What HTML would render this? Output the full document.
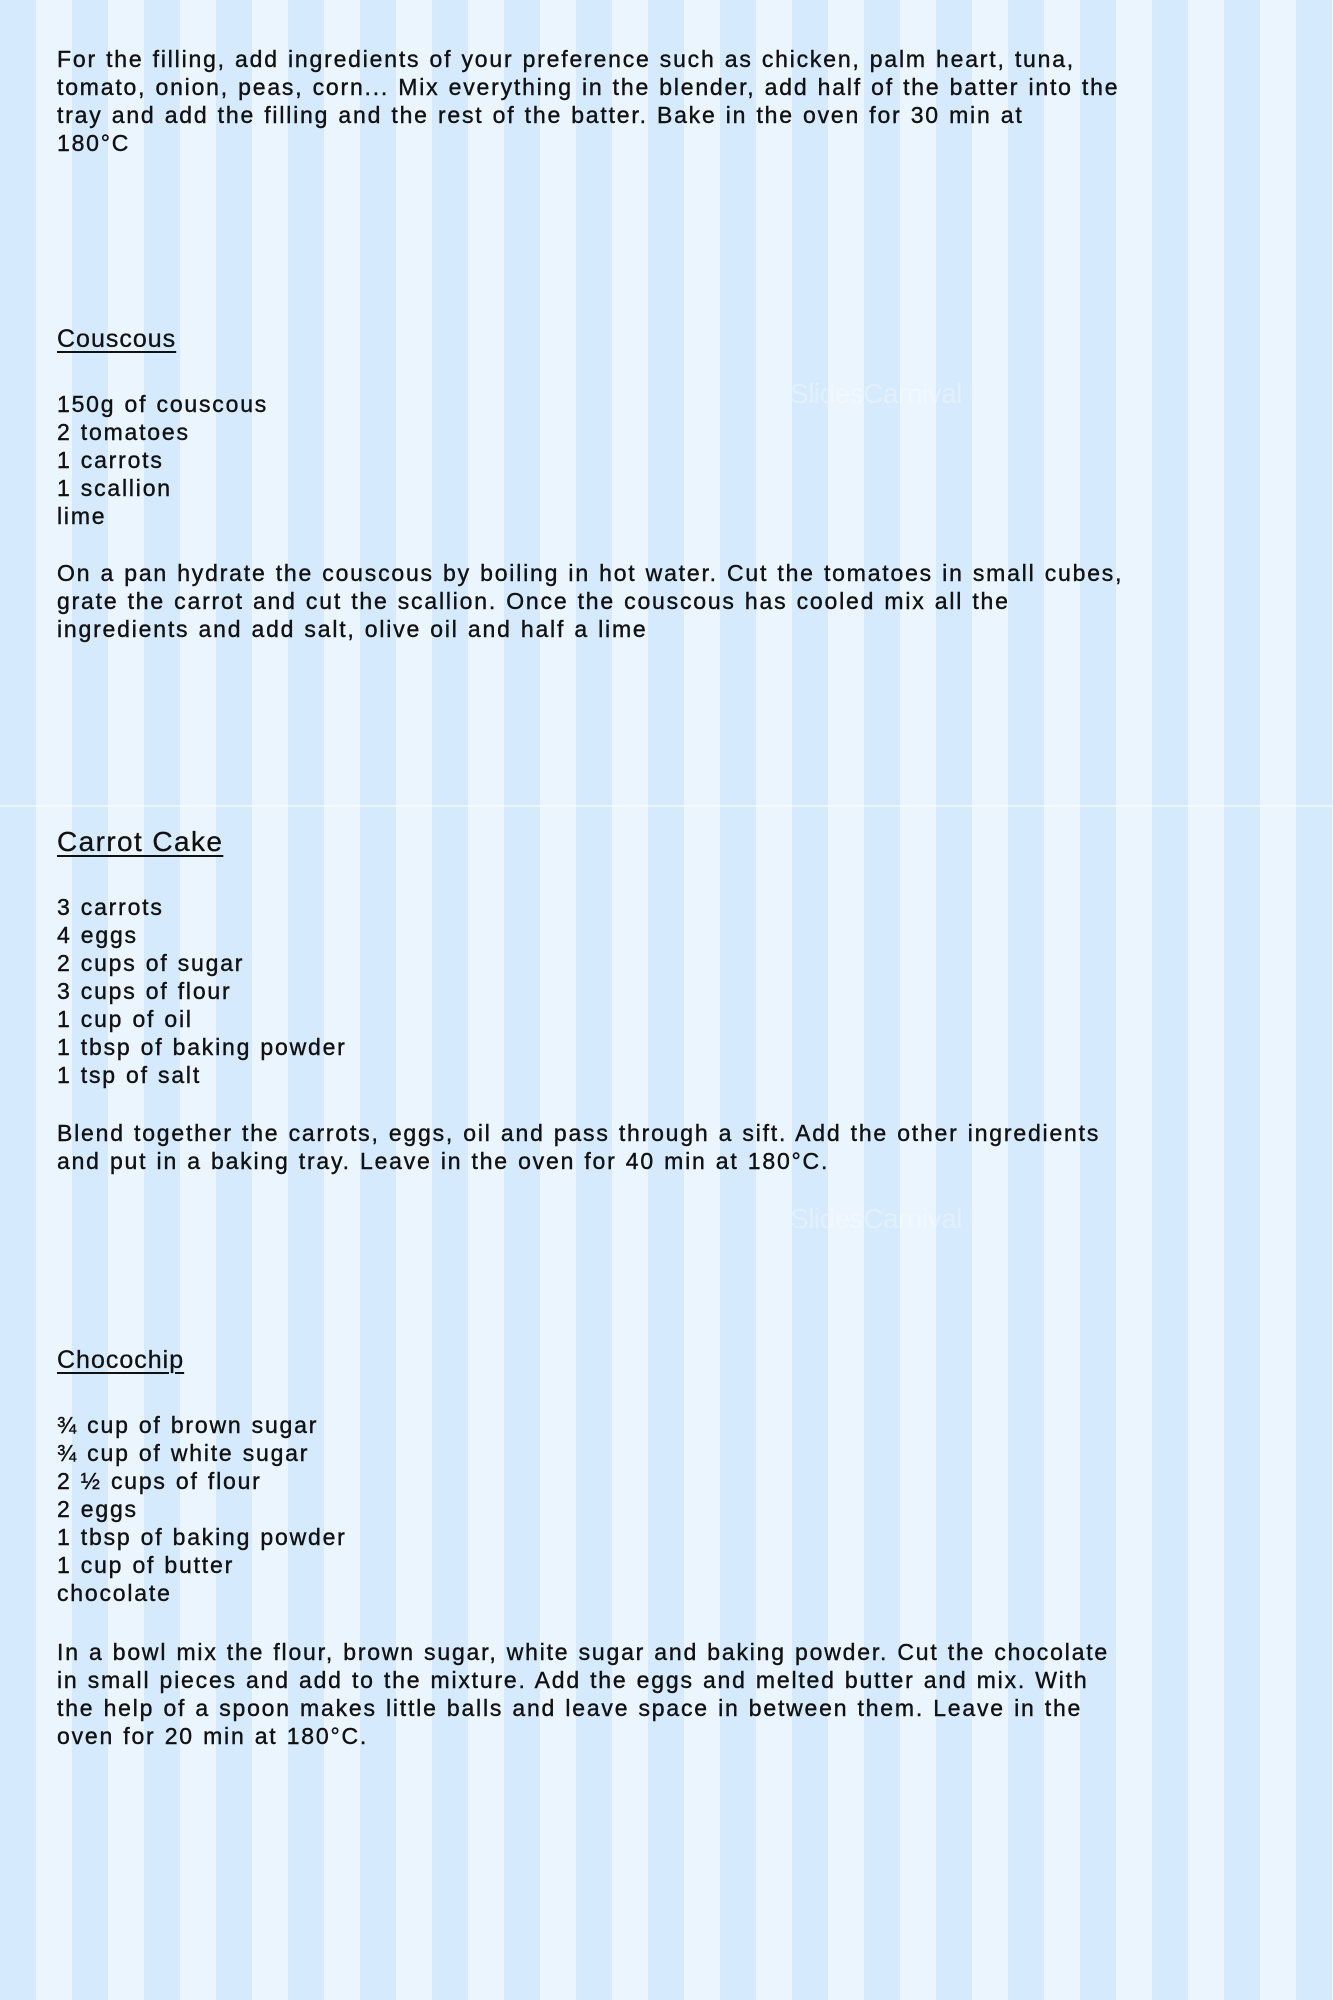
<!DOCTYPE html>
<html><head><meta charset="utf-8"><style>
html,body{margin:0;padding:0}
body{width:1333px;height:2000px;position:relative;overflow:hidden;
background:repeating-linear-gradient(90deg,#d5eafc 0,#d5eafc 36px,#eaf5fe 36px,#eaf5fe 72px);
font-family:"Liberation Sans",sans-serif;color:#111;}
.seam{position:absolute;left:0;width:1333px;height:2px;top:805px;background:rgba(255,255,255,.5)}
.b{position:absolute;left:57px;font-size:23px;line-height:28px;letter-spacing:1.8px;word-spacing:1px;white-space:pre;margin:0;-webkit-text-stroke:0.4px #111}
.h{position:absolute;left:57px;font-size:25px;line-height:30px;text-decoration:underline;text-decoration-thickness:2px;text-underline-offset:4px;letter-spacing:1px;margin:0;-webkit-text-stroke:0.3px #111}
.wm{position:absolute;font-size:28px;color:#fff;opacity:.3;letter-spacing:-0.5px}
</style></head><body>
<div class="seam"></div>
<div class="wm" style="left:790px;top:378px">SlidesCarnival</div>
<div class="wm" style="left:790px;top:1203px">SlidesCarnival</div>

<p class="b" style="top:45px">For the filling, add ingredients of your preference such as chicken, palm heart, tuna,
tomato, onion, peas, corn... Mix everything in the blender, add half of the batter into the
tray and add the filling and the rest of the batter. Bake in the oven for 30 min at
180°C</p>

<p class="h" style="top:324px">Couscous</p>
<p class="b" style="top:390px">150g of couscous
2 tomatoes
1 carrots
1 scallion
lime</p>
<p class="b" style="top:559px">On a pan hydrate the couscous by boiling in hot water. Cut the tomatoes in small cubes,
grate the carrot and cut the scallion. Once the couscous has cooled mix all the
ingredients and add salt, olive oil and half a lime</p>

<p class="h" style="top:826px;font-size:28px;line-height:32px;letter-spacing:1.4px">Carrot Cake</p>
<p class="b" style="top:893px">3 carrots
4 eggs
2 cups of sugar
3 cups of flour
1 cup of oil
1 tbsp of baking powder
1 tsp of salt</p>
<p class="b" style="top:1119px">Blend together the carrots, eggs, oil and pass through a sift. Add the other ingredients
and put in a baking tray. Leave in the oven for 40 min at 180°C.</p>

<p class="h" style="top:1345px">Chocochip</p>
<p class="b" style="top:1411px">¾ cup of brown sugar
¾ cup of white sugar
2 ½ cups of flour
2 eggs
1 tbsp of baking powder
1 cup of butter
chocolate</p>
<p class="b" style="top:1638px">In a bowl mix the flour, brown sugar, white sugar and baking powder. Cut the chocolate
in small pieces and add to the mixture. Add the eggs and melted butter and mix. With
the help of a spoon makes little balls and leave space in between them. Leave in the
oven for 20 min at 180°C.</p>
</body></html>
